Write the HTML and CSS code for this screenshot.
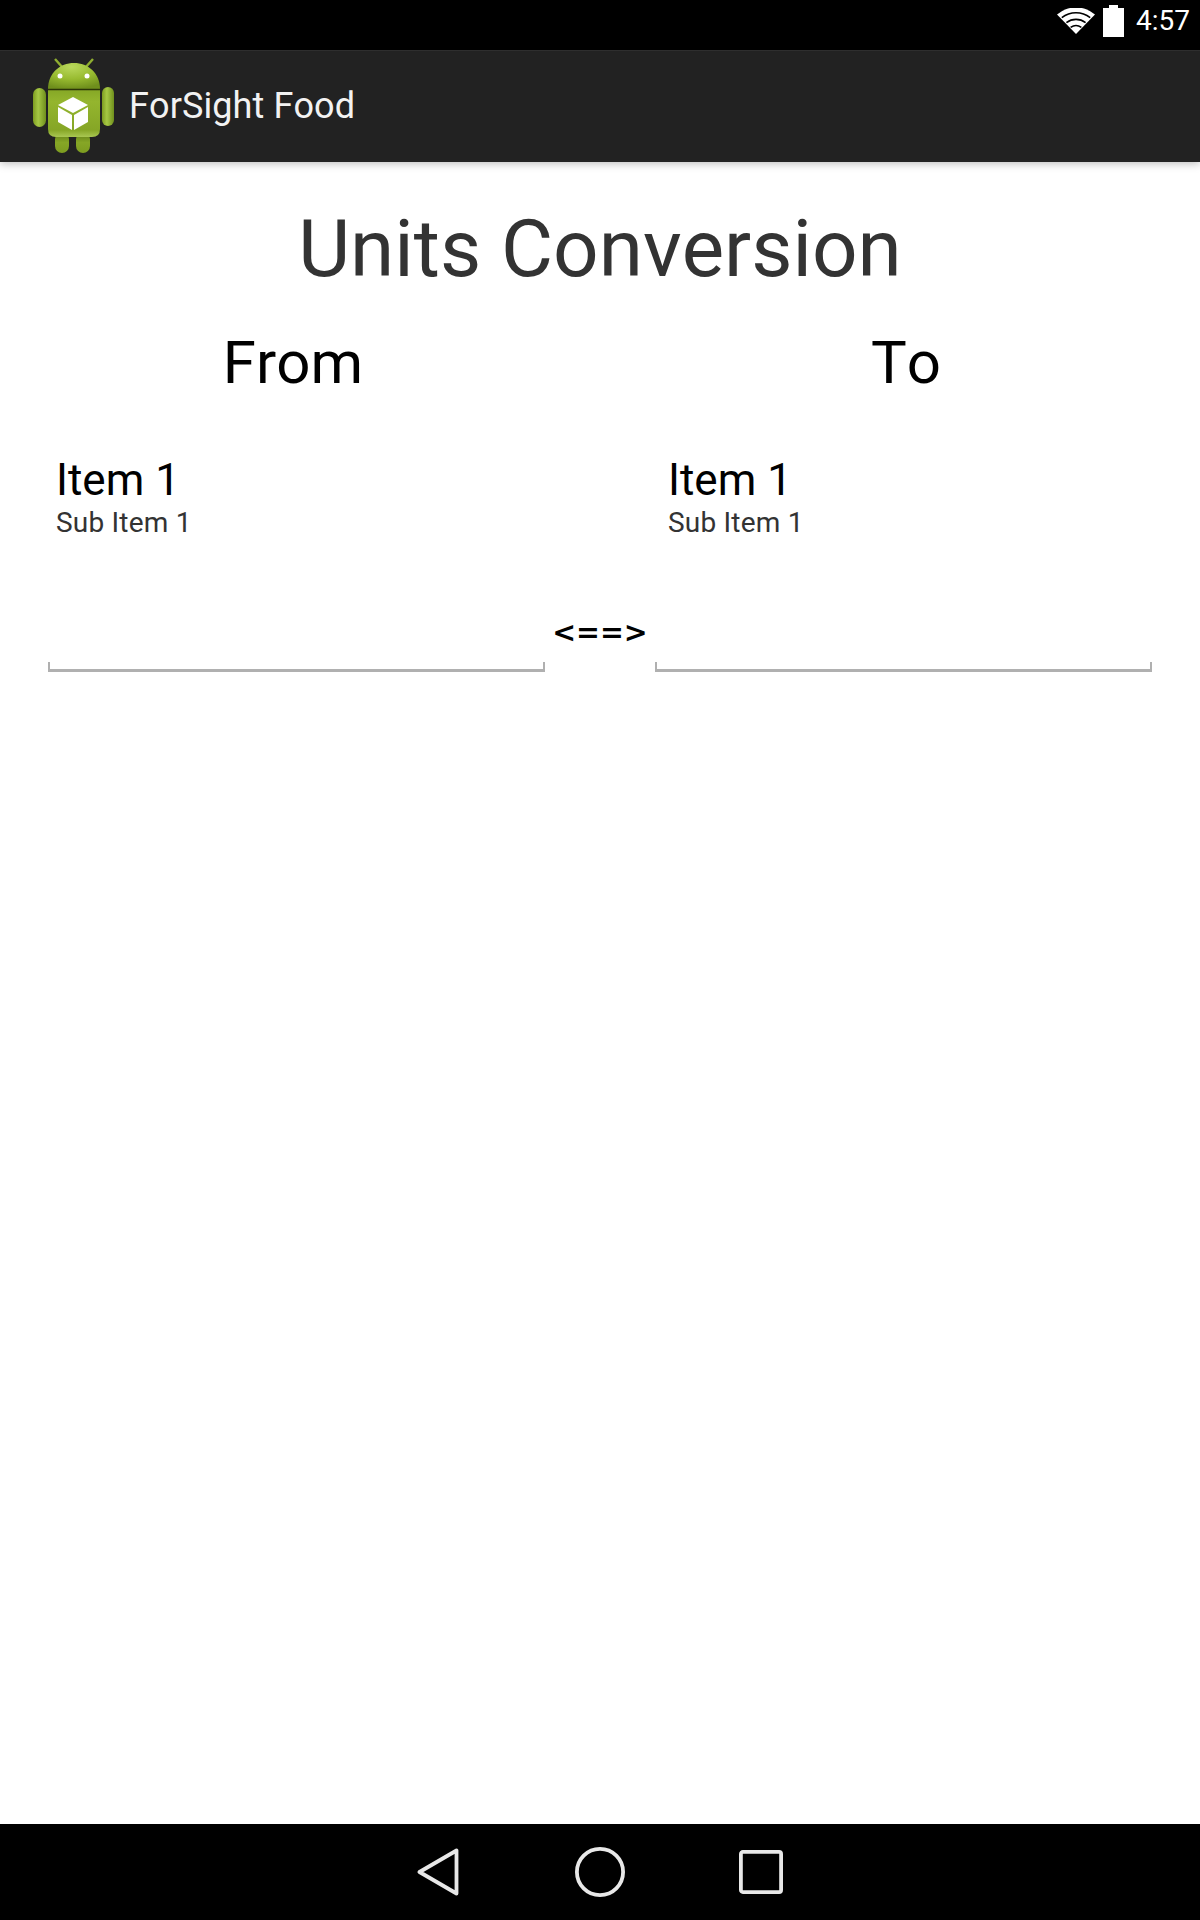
FILE: index.html
```html
<!DOCTYPE html>
<html lang="en">

<head>
    <meta charset="UTF-8">
    <meta name="viewport" content="width=device-width, initial-scale=1.0">
    <title>ForSight Food</title>
    <link rel="stylesheet" href="styles.css">
</head>

<body>
    <div class="statusBar">
        <svg class="wifiIcon" width="38" height="26" viewBox="0 0 38 26">
            <path d="M19 26 L0 6.5 A29 29 0 0 1 38 6.5 Z" fill="#fff" />
            <path d="M4.8 9.6 A23 23 0 0 1 33.2 9.6 M9.4 14.6 A16 16 0 0 1 28.6 14.6 M13.6 19.4 A9.5 9.5 0 0 1 24.4 19.4" fill="none" stroke="#000" stroke-width="1.6" />
        </svg>
        <svg class="batteryIcon" width="21" height="32" viewBox="0 0 21 32">
            <path d="M6 0 H15 V3 H21 V32 H0 V3 H6 Z" fill="#fff" />
        </svg>
        <span class="clock">4:57</span>
    </div>

    <header class="actionBar">
        <svg class="appIcon" width="82" height="96" viewBox="0 0 82 96">
            <defs>
                <radialGradient id="greenHead" cx="0.45" cy="0.15" r="0.85">
                    <stop offset="0" stop-color="#b9d85c" />
                    <stop offset="0.55" stop-color="#98bb30" />
                    <stop offset="1" stop-color="#6f8f1c" />
                </radialGradient>
                <linearGradient id="greenBody" x1="0" y1="0" x2="0" y2="1">
                    <stop offset="0" stop-color="#86a826" />
                    <stop offset="0.25" stop-color="#94b52e" />
                    <stop offset="0.85" stop-color="#86a626" />
                    <stop offset="1" stop-color="#a9c752" />
                </linearGradient>
                <linearGradient id="greenArm" x1="0" y1="0" x2="1" y2="0">
                    <stop offset="0" stop-color="#7d9c20" />
                    <stop offset="0.4" stop-color="#a6c844" />
                    <stop offset="1" stop-color="#6f8f1c" />
                </linearGradient>
                <linearGradient id="greenLeg" x1="0" y1="0" x2="0" y2="1">
                    <stop offset="0" stop-color="#5f7c16" />
                    <stop offset="0.5" stop-color="#86a626" />
                    <stop offset="1" stop-color="#7d9c20" />
                </linearGradient>
            </defs>
            <path d="M22 1 L30 10 M60 1 L52 10" stroke="#8fae30" stroke-width="2.4" />
            <rect x="22" y="74" width="14" height="21" rx="7" fill="url(#greenLeg)" />
            <rect x="43" y="74" width="14" height="21" rx="7" fill="url(#greenLeg)" />
            <path d="M15 31 C15 15 27 5 41 5 C55 5 67 15 67 31 Z" fill="url(#greenHead)" />
            <rect x="0" y="30" width="13" height="39" rx="6.5" fill="url(#greenArm)" />
            <rect x="69" y="29" width="12" height="39" rx="6" fill="url(#greenArm)" />
            <path d="M15 32 H67 V71 Q67 79 59 79 H23 Q15 79 15 71 Z" fill="url(#greenBody)" />
            <path d="M15 31.5 H67" stroke="#2c3508" stroke-width="1.4" />
            <circle cx="27" cy="18" r="2.5" fill="#fff" />
            <circle cx="54" cy="18" r="2.5" fill="#fff" />
            <path d="M40 39 L55 47 L40 55 L25 47 Z" fill="#fff" />
            <path d="M25 49 L39 57 V72 L25 64 Z" fill="#fff" />
            <path d="M41 57 L55 49 V64 L41 72 Z" fill="#fff" />
        </svg>
        <span class="appTitle">ForSight Food</span>
    </header>

    <main class="content">
        <h1 class="pageTitle">Units Conversion</h1>
        <div class="unitColumns">
            <section>
                <h2 class="columnTitle">From</h2>
                <div class="listItem">
                    <div class="itemTitle">Item 1</div>
                    <div class="itemSub">Sub Item 1</div>
                </div>
            </section>
            <section>
                <h2 class="columnTitle">To</h2>
                <div class="listItem">
                    <div class="itemTitle">Item 1</div>
                    <div class="itemSub">Sub Item 1</div>
                </div>
            </section>
        </div>
        <div class="editRow">
            <div class="editField"></div>
            <div class="arrow">&lt;==&gt;</div>
            <div class="editField"></div>
        </div>
    </main>

    <nav class="navBar">
        <svg width="42" height="48" viewBox="0 0 42 48">
            <path d="M2.5 24 L39.5 2.5 V45.5 Z" fill="none" stroke="#e8e8e8" stroke-width="3.8" stroke-linejoin="round" />
        </svg>
        <svg class="navHome" width="50" height="50" viewBox="0 0 50 50">
            <circle cx="25" cy="25" r="23.1" fill="none" stroke="#e8e8e8" stroke-width="3.8" />
        </svg>
        <svg width="44" height="44" viewBox="0 0 44 44">
            <rect x="1.9" y="1.9" width="40.2" height="40.2" rx="2" fill="none" stroke="#e8e8e8" stroke-width="3.8" />
        </svg>
    </nav>
</body>

</html>
```

FILE: styles.css
```css
* {
    box-sizing: border-box;
}

body {
    margin: 0px;
    padding: 0px;
    height: 1920px;
    display: flex;
    flex-direction: column;
    background-color: #fff;
    font-family: Roboto, "Liberation Sans", sans-serif;
    font-kerning: none;
    overflow: hidden;
}

.statusBar {
    height: 50px;
    background-color: #000;
    display: flex;
    align-items: center;
    justify-content: flex-end;
    padding-right: 10px;
    padding-bottom: 9px;
}

.wifiIcon {
    margin-right: 8px;
}

.batteryIcon {
    margin-right: 12px;
}

.clock {
    color: #fff;
    font-size: 28px;
}

.actionBar {
    height: 112px;
    background-color: #222;
    border-top: 1px solid #2e2e2e;
    display: flex;
    align-items: center;
    padding-left: 33px;
    padding-bottom: 1px;
    box-shadow: 0px 2px 8px rgba(0, 0, 0, 0.25);
    position: relative;
}

.appTitle {
    color: #f2f2f2;
    font-size: 36px;
    letter-spacing: 0.1px;
    margin-left: 14px;
}

.content {
    flex: 1;
}

.pageTitle {
    margin: 42px 0px 0px 0px;
    text-align: center;
    font-size: 80px;
    font-weight: 400;
    line-height: 90px;
    color: #333;
}

.unitColumns {
    display: grid;
    grid-template-columns: 490px 492px;
    column-gap: 122px;
    margin: 34px 48px 0px 48px;
}

.columnTitle {
    margin: 0px;
    text-align: center;
    font-size: 60px;
    font-weight: 400;
    line-height: 70px;
    color: #000;
}

.listItem {
    margin-top: 57px;
    padding-left: 8px;
    height: 129px;
}

.itemTitle {
    font-size: 44px;
    line-height: 50px;
    color: #000;
}

.itemSub {
    font-size: 28px;
    letter-spacing: 0.2px;
    line-height: 36px;
    color: #333;
}

.editRow {
    display: grid;
    grid-template-columns: 497px 110px 497px;
    align-items: end;
    margin: 31px 48px 0px 48px;
}

.editField {
    height: 10px;
    border-left: 2px solid #b0b0b0;
    border-right: 2px solid #b0b0b0;
    border-bottom: 3px solid #b0b0b0;
}

.arrow {
    text-align: center;
    font-family: "DejaVu Sans", sans-serif;
    font-size: 28.5px;
    font-weight: 700;
    line-height: 36px;
    margin-bottom: 21px;
    color: #000;
}

.navBar {
    height: 96px;
    background-color: #000;
    display: flex;
    align-items: center;
    justify-content: center;
    gap: 114px;
}

.navHome {
    margin-left: 2px;
}
```
